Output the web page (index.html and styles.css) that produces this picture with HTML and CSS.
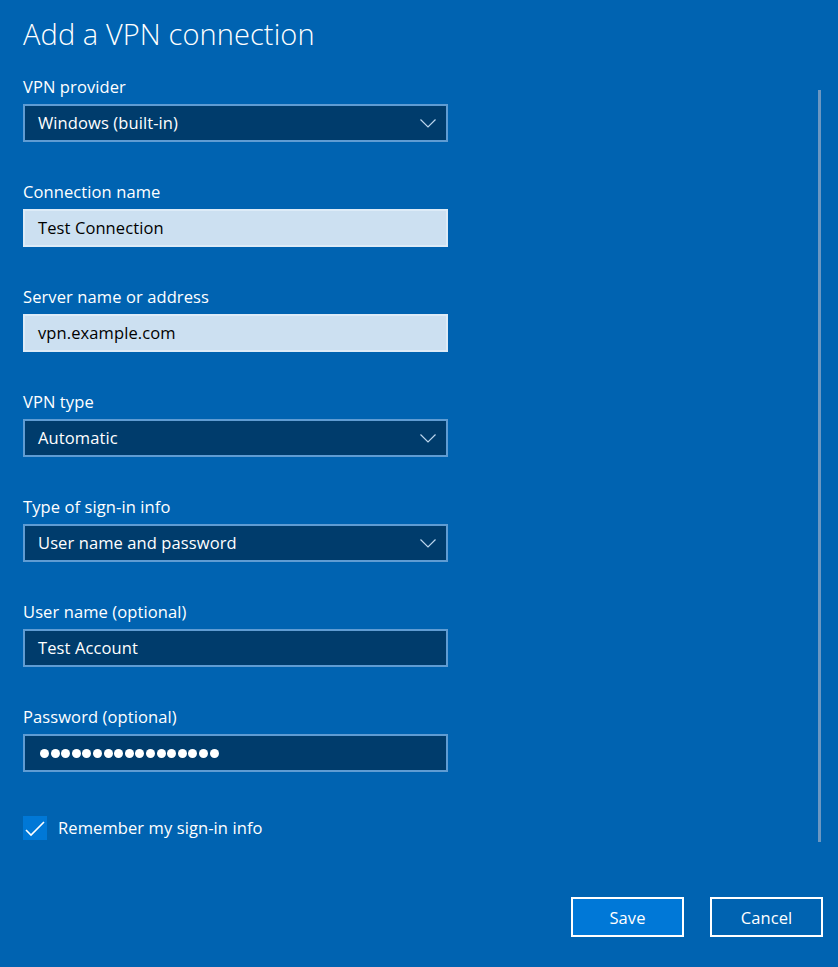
FILE: index.html
```html
<!DOCTYPE html>
<html lang="en">

<head>
    <meta charset="UTF-8">
    <meta name="viewport" content="width=device-width, initial-scale=1.0">
    <link rel="stylesheet" href="styles.css">
    <title>Add a VPN connection</title>
</head>

<body>
    <div class="page">
        <div class="form">
            <h1 class="title">Add a VPN connection</h1>

            <div class="field">
                <span class="label">VPN provider</span>
                <div class="box box_dark select">
                    <span>Windows (built-in)</span>
                    <svg class="chevron" width="16" height="9" viewBox="0 0 16 9"><polyline points="0.5,0.5 8,8 15.5,0.5" /></svg>
                </div>
            </div>

            <div class="field">
                <span class="label">Connection name</span>
                <div class="box box_light"><span>Test Connection</span></div>
            </div>

            <div class="field">
                <span class="label">Server name or address</span>
                <div class="box box_light"><span>vpn.example.com</span></div>
            </div>

            <div class="field">
                <span class="label">VPN type</span>
                <div class="box box_dark select">
                    <span>Automatic</span>
                    <svg class="chevron" width="16" height="9" viewBox="0 0 16 9"><polyline points="0.5,0.5 8,8 15.5,0.5" /></svg>
                </div>
            </div>

            <div class="field">
                <span class="label">Type of sign-in info</span>
                <div class="box box_dark select">
                    <span>User name and password</span>
                    <svg class="chevron" width="16" height="9" viewBox="0 0 16 9"><polyline points="0.5,0.5 8,8 15.5,0.5" /></svg>
                </div>
            </div>

            <div class="field">
                <span class="label">User name (optional)</span>
                <div class="box box_dark"><span>Test Account</span></div>
            </div>

            <div class="field">
                <span class="label">Password (optional)</span>
                <div class="box box_dark">
                    <div class="dots">
                        <i></i><i></i><i></i><i></i><i></i><i></i><i></i><i></i><i></i>
                        <i></i><i></i><i></i><i></i><i></i><i></i><i></i><i></i>
                    </div>
                </div>
            </div>

            <label class="check">
                <span class="check_box">
                    <svg width="24" height="24" viewBox="0 0 24 24"><polyline points="3,14 8,19 21,6" /></svg>
                </span>
                <span class="check_text">Remember my sign-in info</span>
            </label>
        </div>

        <div class="buttons">
            <button class="btn btn_save">Save</button>
            <button class="btn">Cancel</button>
        </div>

        <div class="scrollbar"></div>
    </div>
</body>

</html>
```

FILE: styles.css
```css
* {
    margin: 0px;
    padding: 0px;
    box-sizing: border-box;
}

body {
    background: #0063b1;
    font-family: "Open Sans", "Noto Sans", sans-serif;
    color: #ffffff;
}

.page {
    position: relative;
    width: 838px;
    height: 967px;
}

.form {
    width: 448px;
    padding-top: 16px;
    padding-left: 23px;
    display: flex;
    flex-direction: column;
}

.title {
    font-size: 29px;
    font-weight: 300;
    line-height: 36px;
    margin-bottom: 25px;
    letter-spacing: 0.1px;
}

.field {
    display: flex;
    flex-direction: column;
    gap: 7px;
    margin-bottom: 40px;
}

.label {
    font-size: 16.5px;
    line-height: 20px;
    letter-spacing: 0.1px;
}

.box {
    height: 38px;
    border: 2px solid #5f9cd3;
    padding-left: 13px;
    padding-right: 10px;
    display: flex;
    align-items: center;
    font-size: 16.5px;
    line-height: 34px;
    letter-spacing: 0.1px;
}

.box_dark {
    background: #003c6c;
}

.box_light {
    background: #cce0f1;
    border-color: #ddebf7;
    color: #000000;
}

.select {
    justify-content: space-between;
}

.chevron polyline {
    fill: none;
    stroke: #bcd6ee;
    stroke-width: 1.2;
}

.dots {
    display: flex;
    gap: 1.6px;
    padding-left: 2px;
}

.dots i {
    width: 9px;
    height: 9px;
    border-radius: 50%;
    background: #ffffff;
}

.check {
    display: flex;
    align-items: center;
    gap: 11px;
    margin-top: 4px;
}

.check_box {
    width: 24px;
    height: 24px;
    background: #0078d7;
}

.check_box svg {
    display: block;
}

.check_box polyline {
    fill: none;
    stroke: #ffffff;
    stroke-width: 1.6;
}

.check_text {
    font-size: 16.5px;
    line-height: 24px;
    letter-spacing: 0.1px;
}

.buttons {
    display: flex;
    justify-content: flex-end;
    gap: 26px;
    padding-right: 15px;
    margin-top: 57px;
}

.btn {
    width: 113px;
    height: 40px;
    border: 2px solid #ffffff;
    background: #0063b1;
    color: #ffffff;
    font-family: "Open Sans", "Noto Sans", sans-serif;
    font-size: 16.5px;
    letter-spacing: 0.1px;
}

.btn_save {
    background: #0078d7;
}

.scrollbar {
    position: absolute;
    left: 818px;
    top: 90px;
    width: 3px;
    height: 752px;
    background: #6b97c2;
}
```
